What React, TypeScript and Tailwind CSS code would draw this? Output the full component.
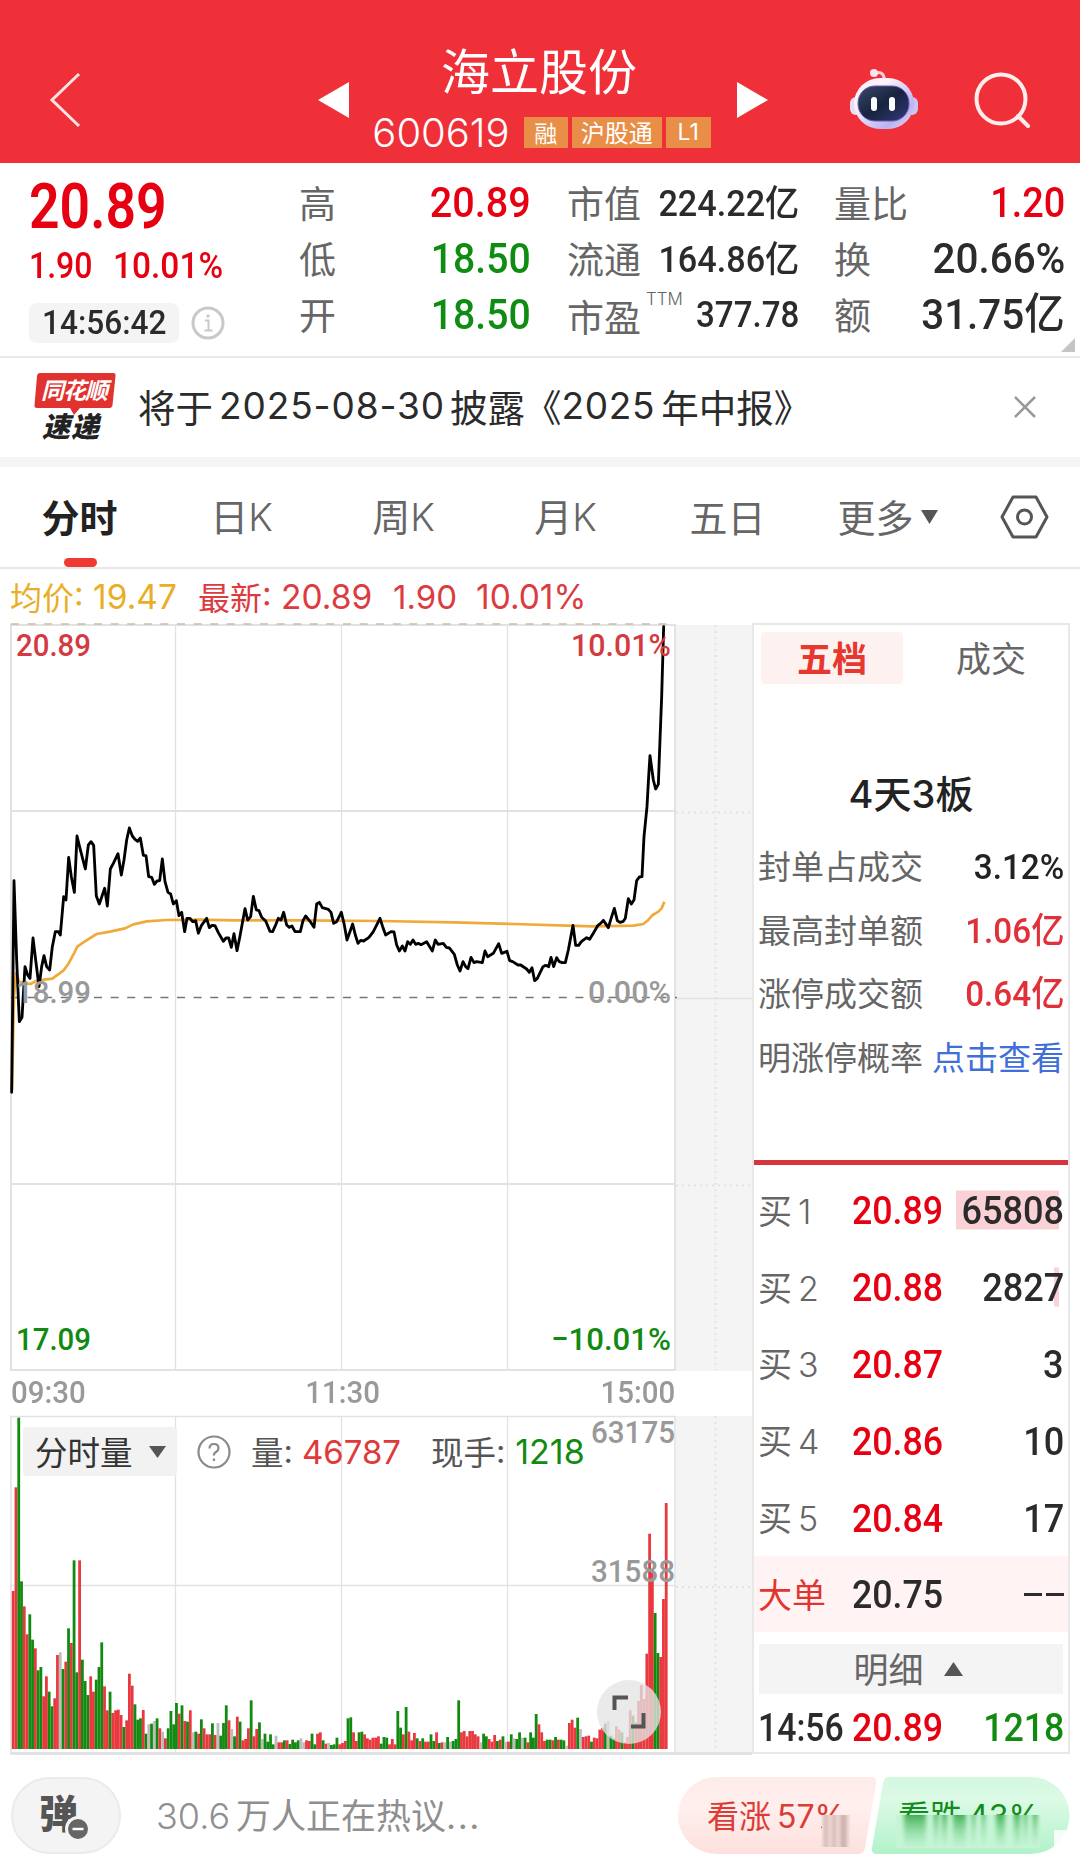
import type { ReactNode } from 'react'
import clsx from 'clsx'

const UP = '#e8393f'
const DOWN = '#128a12'
const FLAT = '#bdbdbd'

const tabs = ['分时', '日K', '周K', '月K', '五日']

const limitStats = [
  { label: '封单占成交', value: '3.12%', tone: 'text-[#222]' },
  { label: '最高封单额', value: '1.06亿', tone: 'text-[#e0303a]' },
  { label: '涨停成交额', value: '0.64亿', tone: 'text-[#e0303a]' },
]

const bids = [
  { level: 1, price: '20.89', volume: '65808', depth: 103 },
  { level: 2, price: '20.88', volume: '2827', depth: 5 },
  { level: 3, price: '20.87', volume: '3', depth: 0 },
  { level: 4, price: '20.86', volume: '10', depth: 0 },
  { level: 5, price: '20.84', volume: '17', depth: 0 },
]

// Minute prices, in thirds of a pixel from the top left of the price chart
const PRICE_LINE =
  '35,1447 42,812 50,1050 58,1235 66,1222 75,1070 83,1095 90,1105 99,984 107,1050 117,1130 125,1070 132,1037 140,1070 149,1080 157,1010 166,965 175,965 181,975 191,860 198,870 206,742 214,800 223,847 231,678 240,715 256,777 265,705 273,695 281,706 289,858 298,882 314,835 322,888 331,777 340,760 354,731 364,795 372,750 380,690 388,654 397,678 405,688 413,694 421,684 430,736 438,737 446,800 455,802 463,823 471,813 479,812 487,747 495,815 504,847 512,852 520,882 529,872 537,917 545,907 554,965 561,925 570,925 578,935 587,932 595,970 604,947 620,925 628,953 636,946 645,947 655,968 670,994 678,984 686,984 694,1012 702,971 711,1022 719,983 727,940 735,896 743,930 752,920 760,859 769,900 777,902 785,922 797,933 810,964 818,965 826,947 835,925 843,930 851,907 860,945 868,952 876,948 885,965 901,965 909,932 917,918 930,934 942,952 950,882 958,877 967,893 985,898 993,907 1001,940 1010,935 1024,907 1032,940 1041,990 1058,942 1066,975 1074,1000 1082,991 1091,993 1107,982 1120,965 1140,925 1148,950 1157,975 1173,965 1182,966 1190,1005 1198,1023 1207,1008 1215,1023 1223,995 1231,1003 1239,990 1247,1003 1255,1000 1263,1004 1280,995 1297,1023 1306,990 1314,1003 1330,1000 1339,1012 1348,1014 1363,1033 1372,1065 1380,1083 1389,1055 1397,1070 1404,1076 1413,1042 1422,1058 1430,1055 1447,1058 1455,1023 1463,1040 1480,1030 1496,1001 1505,1030 1521,1024 1529,1052 1538,1055 1554,1065 1562,1065 1580,1077 1588,1087 1596,1073 1604,1112 1612,1105 1629,1070 1637,1066 1646,1070 1653,1042 1661,1070 1670,1043 1678,1055 1687,1058 1696,1058 1705,1020 1719,946 1727,1006 1736,1006 1744,995 1760,983 1769,988 1780,970 1794,946 1802,940 1810,931 1825,953 1835,920 1843,895 1852,932 1860,937 1870,934 1876,925 1885,866 1894,882 1902,870 1910,812 1918,801 1926,800 1932,680 1941,590 1946,500 1950,437 1960,510 1967,537 1975,523 1980,390 1985,260 1991,50'

const AVERAGE_LINE =
  '36,1440 42,1160 48,1090 58,1115 75,1120 92,1122 110,1112 157,1106 190,1082 205,1062 222,1030 232,1010 250,997 290,972 330,965 375,955 400,943 440,934 500,930 600,929 700,931 900,931 1140,933 1360,937 1540,942 1700,947 1780,949 1900,947 1930,942 1945,930 1958,915 1975,905 1985,895 1993,875'

// One bar per minute: r = up, g = down, x = flat, then the height
const VOLUME =
  'r474 r785 g994 g503 r428 r344 g404 g328 r302 g236 g246 r158 r218 g172 g128 r152 r282 x290 g240 r262 g362 r318 g566 g230 r566 g268 g204 g162 r218 r172 g208 g246 g320 r188 r116 g172 r108 r116 r118 r102 g66 r86 r226 r190 g134 g88 g92 r117 g46 x74 g76 x84 g92 r62 x52 r32 g62 g114 g74 g138 r106 g131 r84 g82 r116 x50 g52 r46 g89 r62 r44 r44 g77 r42 x78 g40 g78 g131 r86 x60 g38 r97 g82 r26 r30 r62 g146 r38 r60 g80 x30 g46 g22 g44 g14 x40 r20 r20 g26 r26 g15 g28 g20 g26 x32 x20 r26 r24 g46 g14 r46 r50 g26 r16 x18 g12 g14 g34 r14 r18 r24 g92 g95 r50 r24 g50 g52 r44 r32 r28 r34 r34 r38 g16 g36 g34 r14 r30 r14 g114 g64 r44 g126 r52 r26 r48 g32 r24 g32 r22 r22 g44 g24 r50 g18 r20 x20 g36 x22 g24 g30 g146 r50 r54 r38 r54 r54 r44 r38 x20 g46 g38 r30 r22 r42 g24 r28 g38 x22 r22 g44 x32 g30 g50 x34 g34 r20 g50 g34 g105 r74 r50 r24 g28 g28 r26 g36 r28 g28 g26 x10 r78 r88 r64 g94 x60 r36 r38 r40 g22 r34 r32 r58 r64 g76 x84 g40 g32 r68 r58 g50 r20 r36 r116 g100 r80 r144 r192 r150 r286 r646 r530 g408 g288 r276 r450 r738'

const bars = VOLUME.split(' ').map((item, i) => ({
  x: 11.8 + i * 2.767,
  height: Number(item.slice(1)) / 3,
  color: item[0] === 'r' ? UP : item[0] === 'g' ? DOWN : FLAT,
}))

function Num({ children, className }: { children: ReactNode; className?: string }) {
  return (
    <span
      className={clsx(
        'inline-block whitespace-nowrap font-medium font-[Roboto,"Noto_Sans_CJK_SC",sans-serif]',
        className,
      )}
    >
      {children}
    </span>
  )
}

function Header() {
  return (
    <header className="flex h-[163px] shrink-0 items-center bg-[#f03038] pt-[36px] text-white">
      <div className="w-[318px] pl-[49px]">
        <svg width="33" height="56" viewBox="0 0 33 56" fill="none" stroke="#ffe4e4" strokeWidth="3">
          <path d="M30 2 3 28l27 26" />
        </svg>
      </div>
      <svg width="31" height="36" viewBox="0 0 31 36" fill="#fff">
        <path d="M0 18 31 0v36z" />
      </svg>
      <div className="flex w-[388px] flex-col items-center pr-[3px]">
        <h1 className="h-[60px] pr-[5px] text-[49px] leading-[57px]">海立股份</h1>
        <div className="flex h-[60px] items-center gap-[4px] pt-[6px]">
          <span className="mr-[10px] font-[Inter] text-[40px] leading-none font-light">600619</span>
          <span className="h-[31px] w-[44px] bg-[#e98e47] text-center text-[23px] leading-[30px]">融</span>
          <span className="h-[31px] w-[90px] bg-[#e98e47] text-center text-[24px] leading-[30px]">沪股通</span>
          <span className="h-[31px] w-[45px] bg-[#e98e47] text-center font-[Inter] text-[23px] leading-[31px]">L1</span>
        </div>
      </div>
      <svg width="31" height="36" viewBox="0 0 31 36" fill="#fff">
        <path d="M31 18 0 0v36z" />
      </svg>
      <svg className="ml-[81px]" width="70" height="64" viewBox="0 0 70 64">
        <defs>
          <linearGradient id="shell" x1="0" y1="0" x2="1" y2="1">
            <stop offset="0.3" stopColor="#fdf2fa" />
            <stop offset="0.75" stopColor="#b9b3f2" />
            <stop offset="1" stopColor="#f3d9ee" />
          </linearGradient>
          <linearGradient id="visor" x1="0" y1="0" x2="1" y2="1">
            <stop offset="0" stopColor="#3a4a68" />
            <stop offset="0.5" stopColor="#18233f" />
            <stop offset="1" stopColor="#303a78" />
          </linearGradient>
        </defs>
        <path d="M26 5c7-2 10 2 9 9" stroke="#fbd0dc" strokeWidth="3" fill="none" />
        <circle cx="25" cy="5" r="4" fill="#fde3ea" />
        <rect x="1" y="29" width="12" height="18" rx="6" fill="#e9ddf6" />
        <rect x="57" y="29" width="12" height="18" rx="6" fill="#c9c4f4" />
        <rect x="5" y="10" width="60" height="51" rx="26" fill="url(#shell)" />
        <rect x="9" y="18" width="51" height="35" rx="17" fill="url(#visor)" stroke="#6a5bb8" strokeWidth="1" />
        <rect x="22" y="29" width="6" height="14" rx="3" fill="#fff" />
        <rect x="40" y="29" width="6" height="14" rx="3" fill="#fff" />
      </svg>
      <svg className="ml-[54px]" width="58" height="56" viewBox="0 0 58 56" fill="none" stroke="#ffecec" strokeWidth="4">
        <circle cx="28" cy="27" r="24.5" />
        <path d="m45 44 10 10" strokeLinecap="round" />
      </svg>
    </header>
  )
}

function Stat({ label, children }: { label: ReactNode; children: ReactNode }) {
  return (
    <div className="flex h-[56px] items-center justify-between">
      <span className="text-[37px] leading-[52px] text-[#666]">{label}</span>
      {children}
    </div>
  )
}

function Quote() {
  return (
    <section className="relative flex h-[195px] shrink-0 border-b-2 border-[#e8e8e8] pt-[11px] text-[#2b2b2b]">
      <div className="w-[301px] pt-[2px] pl-[29px] text-[#e60012]">
        <div className="h-[62px]">
          <Num className="origin-left scale-x-[0.85] text-[63px] leading-[62px] font-semibold">20.89</Num>
        </div>
        <div className="flex h-[56px] items-center">
          <Num className="w-[84px] origin-left scale-x-[0.89] text-[36px]">1.90</Num>
          <Num className="origin-left scale-x-[0.93] text-[36px]">10.01%</Num>
        </div>
        <div className="mt-[9px] flex h-[40px] items-center">
          <div className="h-[40px] w-[150px] rounded-lg bg-[#f4f4f4] pl-[13px] text-[#2b2b2b]">
            <Num className="origin-left scale-x-[0.93] text-[34px] leading-[39px]">14:56:42</Num>
          </div>
          <svg className="ml-[12px]" width="34" height="34" viewBox="0 0 34 34" fill="none" stroke="#c9c9c9" strokeWidth="3">
            <circle cx="17" cy="17" r="15" />
            <path d="M14 14.500h3.500v9M13.500 24.500h8" strokeWidth="2" />
            <path d="M17 8.500v3" />
          </svg>
        </div>
      </div>
      <div className="-ml-[2px] w-[232px]">
        <Stat label="高">
          <Num className="origin-right scale-x-[0.92] text-[43px] text-[#e60012]">20.89</Num>
        </Stat>
        <Stat label="低">
          <Num className="origin-right scale-x-[0.91] text-[43px] text-[#0f8c12]">18.50</Num>
        </Stat>
        <Stat label="开">
          <Num className="origin-right scale-x-[0.91] text-[43px] text-[#0f8c12]">18.50</Num>
        </Stat>
      </div>
      <div className="ml-[36px] w-[232px]">
        <Stat label="市值">
          <Num className="origin-right scale-x-[0.95] pt-[3px] text-[36px]">224.22亿</Num>
        </Stat>
        <Stat label="流通">
          <Num className="origin-right scale-x-[0.95] pt-[3px] text-[36px]">164.86亿</Num>
        </Stat>
        <Stat
          label={
            <span className="relative top-[2px]">
              市盈
              <span className="absolute top-[2px] left-[79px] font-[Inter] text-[17px] leading-none font-light">TTM</span>
            </span>
          }
        >
          <Num className="origin-right scale-x-[0.92] pt-[2px] text-[36px]">377.78</Num>
        </Stat>
      </div>
      <div className="ml-[35px] w-[231px]">
        <Stat label="量比">
          <Num className="origin-right scale-x-[0.88] text-[43px] text-[#e60012]">1.20</Num>
        </Stat>
        <Stat label="换">
          <Num className="origin-right scale-x-[0.94] text-[43px]">20.66%</Num>
        </Stat>
        <Stat label="额">
          <Num className="origin-right scale-x-[0.94] text-[43px]">31.75亿</Num>
        </Stat>
      </div>
      <svg className="absolute right-[5px] bottom-[4px]" width="14" height="14" viewBox="0 0 14 14" fill="#c4c4c4">
        <path d="M14 0v14H0z" />
      </svg>
    </section>
  )
}

function Notice() {
  return (
    <section className="flex h-[109px] shrink-0 items-start border-b-10 border-[#f5f5f5] pt-[15px] pl-[34px]">
      <div className="relative h-[70px] w-[82px] font-bold italic">
        <svg className="absolute inset-0" width="82" height="44" viewBox="0 0 82 44" fill="#e2322f">
          <path d="M6 0h73q3 0 2.500 3l-3 29q-.5 3-3 3H46l-6 7-4-7H3q-3 0-2.500-3L3 3q.5-3 3-3z" />
        </svg>
        <div className="relative h-[35px] pl-[7px] text-[23px] leading-[33px] tracking-[-1px] text-white">同花顺</div>
        <div className="h-[32px] pl-[8px] text-[28px] leading-[34px] font-black tracking-[1px] text-[#222]">速递</div>
      </div>
      <p className="ml-[22px] flex h-[66px] w-[661px] items-center text-[37.500px] whitespace-nowrap text-[#2b2b2b]">
        <span>将于</span>
        <span className="ml-[6px] font-[Inter] text-[37px] tracking-[0.9px]">2025-08-30</span>
        <span className="ml-[5px]">披露</span>
        <span className="-ml-[1px]">《</span>
        <span className="font-[Inter] text-[37px] tracking-[0.7px]">2025</span>
        <span className="ml-[6px]">年中报》</span>
      </p>
      <svg className="mt-[23px] ml-[215px]" width="22" height="22" viewBox="0 0 22 22" stroke="#999" strokeWidth="2.500">
        <path d="m1 1 20 20M21 1 1 21" />
      </svg>
    </section>
  )
}

function PeriodTabs() {
  return (
    <nav className="flex h-[102px] shrink-0 items-center border-b-2 border-[#e8e8e8] text-[38px] text-[#666]">
      {tabs.map((tab, i) => (
        <div key={tab} className="relative flex h-full w-[162px] items-center justify-center pr-[3px]">
          <span className={clsx('-mt-[3px]', i === 0 && 'font-bold text-[#222]')}>
            {tab.replace('K', '')}
            {tab.includes('K') && <span className="font-[Inter] text-[38px] font-light">K</span>}
          </span>
          {i === 0 && <span className="absolute bottom-0 left-[64px] h-[9px] w-[33px] rounded-full bg-[#ee3a33]" />}
        </div>
      ))}
      <div className="flex w-[162px] items-center justify-center gap-[7px] pr-[7px]">
        <span className="-mt-[4px]">更多</span>
        <svg width="17" height="14" viewBox="0 0 17 14" fill="#555">
          <path d="M0 0h17L8.500 14z" />
        </svg>
      </div>
      <svg className="ml-[28px]" width="49" height="44" viewBox="0 0 49 44" fill="none" stroke="#555" strokeWidth="3">
        <path d="M13 2h23l11 20-11 20H13L2 22z" strokeLinejoin="round" />
        <circle cx="24.500" cy="22" r="7" />
      </svg>
    </nav>
  )
}

function PriceChart() {
  return (
    <svg width="752" height="749" viewBox="0 623 752 749" fontFamily="Roboto" fontSize="32" fontWeight="500">
      <rect x="676" y="625" width="76" height="746" fill="#f4f4f4" />
      <g stroke="#e2e2e2" strokeWidth="2" fill="none">
        <path d="M11 625V1370H675V625zM11 811H675M11 1184H675" />
        <path d="M175.500 625V1370M341.500 625V1370M507.500 625V1370" strokeWidth="1.300" />
        <path d="M715.500 625V1370M676 812.500H752M676 1185.500H752" strokeDasharray="2 4" />
        <path d="M676 998.500H752" strokeWidth="1.500" />
      </g>
      <path d="M11 624H675" stroke="#c9bf9e" strokeWidth="1.500" strokeDasharray="8 8.600" />
      <path d="M11 997.500H677" stroke="#777" strokeWidth="1.500" strokeDasharray="8 8.600" />
      <g transform="translate(0 610) scale(0.33333)" fill="none" strokeLinejoin="round">
        <polyline points={AVERAGE_LINE} stroke="#efaa3a" strokeWidth="8" />
        <polyline points={PRICE_LINE} stroke="#000" strokeWidth="8.500" strokeLinecap="round" />
      </g>
      <text x="16" y="656" textLength="75" lengthAdjust="spacingAndGlyphs" fill="#d43a42">20.89</text>
      <text x="571" y="656" textLength="100" lengthAdjust="spacingAndGlyphs" fill="#d43a42">10.01%</text>
      <text x="16" y="1003" textLength="75" lengthAdjust="spacingAndGlyphs" fill="#999">18.99</text>
      <text x="588" y="1003" textLength="83" lengthAdjust="spacingAndGlyphs" fill="#999">0.00%</text>
      <text x="16" y="1350" textLength="75" lengthAdjust="spacingAndGlyphs" fill={DOWN}>17.09</text>
      <text x="551" y="1350" textLength="120" lengthAdjust="spacingAndGlyphs" fill={DOWN}>−10.01%</text>
    </svg>
  )
}

function VolumeChart() {
  return (
    <div className="relative h-[340px]">
      <svg className="overflow-visible" width="752" height="340" viewBox="0 1415 752 340" fontFamily="Roboto" fontSize="32" fontWeight="500">
        <rect x="676" y="1416" width="76" height="339" fill="#f4f4f4" />
        <g stroke="#e2e2e2" strokeWidth="1.500" fill="none">
          <path d="M11 1753V1416.500H675V1753M11 1585.500H675" />
          <path d="M10 1753.500H752" strokeWidth="3" />
          <path d="M175.500 1416V1753M341.500 1416V1753M507.500 1416V1753" strokeWidth="1.300" />
          <path d="M715.500 1416V1753M676 1587H752" strokeWidth="2" strokeDasharray="2 4" />
        </g>
        {bars.map((bar) => (
          <rect key={bar.x} x={bar.x} y={1749 - bar.height} width="2.800" height={bar.height} fill={bar.color} />
        ))}
        <text x="591" y="1443" textLength="84" lengthAdjust="spacingAndGlyphs" fill="#999">63175</text>
        <text x="591" y="1582" textLength="84" lengthAdjust="spacingAndGlyphs" fill="#999">31588</text>
        <circle cx="629" cy="1712" r="32" fill="#e4e4e4" fillOpacity="0.780" />
        <path d="M614.500 1710V1697.500H628M631 1726.500H643.500V1713" fill="none" stroke="#555" strokeWidth="4" />
      </svg>
      <div className="absolute top-[12px] left-[23px] flex h-[49px] items-center text-[32.500px] leading-[40px] whitespace-nowrap text-[#555]">
        <div className="flex h-[49px] w-[154px] items-center rounded bg-[#f2f2f2] pl-[12px] text-[#333]">
          <span className="-mt-[2px]">分时量</span>
          <svg className="ml-[16px]" width="17" height="12" viewBox="0 0 17 12" fill="#555">
            <path d="M0 0h17L8.500 12z" />
          </svg>
        </div>
        <svg className="ml-[20px]" width="34" height="34" viewBox="0 0 34 34" fill="none" stroke="#8a8a8a" strokeWidth="2.200">
          <circle cx="17" cy="17" r="15.500" />
          <path d="M12.500 13.500q0-4.500 4.500-4.500t4.500 4.200q0 2.300-2.500 3.800t-2 3.500M17 23.500v2.500" />
        </svg>
        <span className="-mt-[2px] ml-[20px]">量</span>
        <span className="font-[Inter]">:</span>
        <span className="ml-[9px] w-[102px] font-[Inter] text-[33px] text-[#df3a3a]">46787</span>
        <span className="-mt-[2px] ml-[27px]">现手</span>
        <span className="font-[Inter]">:</span>
        <span className="ml-[10px] font-[Inter] text-[34px] text-[#128a12]">1218</span>
      </div>
    </div>
  )
}

function OrderBook() {
  return (
    <aside className="mt-[54px] flex h-[1131px] w-[318px] flex-col border-2 border-[#e8e8e8] text-[#2b2b2b]">
      <div className="flex shrink-0 pt-[7px] pl-[7px] text-[35px]">
        <div className="h-[52px] w-[142px] rounded bg-[#fef2f1] text-center leading-[50px] font-bold text-[#e8372f]">五档</div>
        <div className="ml-[17px] h-[52px] w-[142px] text-center leading-[50px] text-[#666]">成交</div>
      </div>
      <div className="mt-[81px] h-[54px] shrink-0 text-center text-[38px] leading-[54px] font-medium text-[#222]">
        <span className="font-[Inter]">4</span>天<span className="font-[Inter]">3</span>板
      </div>
      <div className="mt-[15px] h-[326px] shrink-0 pr-[4px] pl-[4px] text-[33px]">
        {limitStats.map((row) => (
          <div key={row.label} className="flex h-[63.700px] items-center justify-between">
            <span className="text-[#666]">{row.label}</span>
            <Num className={clsx('origin-right scale-x-[0.95] pt-[5px] text-[35px]', row.tone)}>{row.value}</Num>
          </div>
        ))}
        <div className="flex h-[63.700px] items-center justify-between">
          <span className="text-[#666]">明涨停概率</span>
          <span className="text-[#3f6fd9]">点击查看</span>
        </div>
      </div>
      <div className="h-[5px] shrink-0 bg-[#d3363d]" />
      <div className="shrink-0 pt-[7px]">
        {bids.map((bid) => (
          <div key={bid.level} className="flex h-[76.800px] items-center pl-[4px] text-[34px]">
            <span className="w-[94px] text-[#666]">
              买<span className="ml-[6px] font-[Inter] font-light">{bid.level}</span>
            </span>
            <Num className="w-[96px] origin-left scale-x-[0.94] pt-[3px] text-[38px] text-[#e60012]">{bid.price}</Num>
            <div className="relative flex flex-1 justify-end pr-[4px]">
              <span
                className="absolute top-1/2 right-[9px] h-[39px] -translate-y-1/2 bg-[#fad2d5]"
                style={{ width: bid.depth }}
              />
              <Num className="relative origin-right scale-x-[0.95] pt-[3px] text-[38px]">{bid.volume}</Num>
            </div>
          </div>
        ))}
      </div>
      <div className="flex h-[76px] shrink-0 items-center bg-[#fff3f3] pr-[4px] pl-[4px]">
        <span className="w-[94px] text-[34px] text-[#e2352f]">大单</span>
        <Num className="origin-left scale-x-[0.94] pt-[4px] text-[38px]">20.75</Num>
        <svg className="mt-[2px] ml-auto" width="40" height="4" viewBox="0 0 40 4" fill="#2b2b2b">
          <path d="M0 0h18v3H0zM22 0h18v3H22z" />
        </svg>
      </div>
      <div className="mx-[5px] mt-[12px] flex h-[50px] shrink-0 items-center justify-center gap-[20px] bg-[#f4f4f4] pr-[6px] text-[35px] text-[#666]">
        <span className="-mt-[2px]">明细</span>
        <svg width="19" height="14" viewBox="0 0 19 14" fill="#555">
          <path d="M0 14h19L9.500 0z" />
        </svg>
      </div>
      <div className="flex h-[57px] shrink-0 items-center pt-[13px] pr-[4px] pl-[4px]">
        <Num className="w-[94px] origin-left scale-x-[0.89] text-[38px]">14:56</Num>
        <Num className="origin-left scale-x-[0.94] text-[38px] text-[#e60012]">20.89</Num>
        <Num className="ml-auto origin-right scale-x-[0.94] text-[38px] text-[#128a12]">1218</Num>
      </div>
    </aside>
  )
}

function Footer() {
  return (
    <footer className="flex h-[104px] items-start pt-[22px] pl-[11px]">
      <div className="relative h-[77px] w-[110px] rounded-full border-2 border-[#ebebeb] bg-[#f4f4f4] pl-[26px]">
        <span className="block text-[39px] leading-[64px] font-black text-[#555]">弹</span>
        <svg className="absolute top-[37px] left-[52px]" width="26" height="26" viewBox="0 0 26 26">
          <circle cx="13" cy="13" r="11.500" fill="#666" stroke="#f4f4f4" strokeWidth="3" />
          <path d="M7.500 13h11" stroke="#fff" strokeWidth="2.500" />
        </svg>
      </div>
      <p className="ml-[35px] w-[522px] text-[35px] leading-[74px] text-[#8f8f8f]">
        <span className="font-[Inter] text-[36px] font-light">30.6</span>
        <span className="ml-[6px]">万人正在热议</span>
        <span className="font-[Inter] tracking-[1.5px]">...</span>
      </p>
      <div className="relative flex h-[77px] w-[392px] text-[32px] leading-[75px]">
        <svg className="absolute inset-0" width="392" height="77" viewBox="0 0 392 77">
          <defs>
            <linearGradient id="rise" x1="0" y1="0" x2="0" y2="1">
              <stop offset="0" stopColor="#fdebea" />
              <stop offset="0.400" stopColor="#ffefed" />
              <stop offset="1" stopColor="#fde0dd" />
            </linearGradient>
            <linearGradient id="fall" x1="0" y1="0" x2="0" y2="1">
              <stop offset="0" stopColor="#d3f8df" />
              <stop offset="0.300" stopColor="#dcfae6" />
              <stop offset="1" stopColor="#b2f2c9" />
            </linearGradient>
          </defs>
          <path d="M38.500 0H193q6 0 5 6l-11 65q-1 6-7 6H38.500a38.500 38.500 0 0 1 0-77z" fill="url(#rise)" />
          <path d="M211 0H353a38.500 38.500 0 0 1 0 77H199q-6 0-5-6l11-65q1-6 6-6z" fill="url(#fall)" />
        </svg>
        <span className="relative w-[190px] pl-[29px] text-[#dc3b36]">
          看涨<span className="ml-[6px] font-[Inter]">57%</span>
        </span>
        <span className="relative pl-[30px] text-[#118c1c]">
          看跌<span className="ml-[6px] font-[Inter]">43%</span>
        </span>
        {/* Smeared lower edge of the vote labels */}
        <svg className="absolute inset-0" width="392" height="77" viewBox="0 0 392 77">
          <defs>
            <linearGradient id="smearGreen" x1="0" y1="0" x2="0" y2="1">
              <stop offset="0" stopColor="#1c9a2c" stopOpacity="0.750" />
              <stop offset="1" stopColor="#7fdc97" stopOpacity="0.100" />
            </linearGradient>
            <filter id="soft" x="-10%" y="-10%" width="120%" height="120%">
              <feGaussianBlur stdDeviation="2 0.600" />
            </filter>
          </defs>
          <path d="M218 38H362V71H218z" fill="#c6f5d6" />
          <g filter="url(#soft)" fill="url(#smearGreen)">
            <path d="M226 38h22v32h-22zM256 38h4v32h-4zM264 38h5v32h-5zM275 38h13v32h-13zM294 38h3v32h-3zM304 38h3v32h-3zM318 38h9v32h-9zM336 38h6v32h-6zM346 38h3v32h-3zM355 38h4v32h-4z" />
          </g>
          <path d="M144 38H172V71H144z" fill="#fbe5e2" />
          <g filter="url(#soft)" fill="#8d6f6d" fillOpacity="0.450">
            <path d="M146 38h4v32h-4zM154 38h4v32h-4zM162 38h7v32h-7z" />
          </g>
          <path d="M376 53h16v24h-16z" fill="#fff" fillOpacity="0.850" />
        </svg>
      </div>
    </footer>
  )
}

export default function App() {
  return (
    <div className="flex h-[1859px] w-[1080px] flex-col overflow-hidden bg-white font-['Noto_Sans_CJK_SC',sans-serif]">
      <Header />
      <Quote />
      <Notice />
      <PeriodTabs />
      <main className="flex h-[1186px] shrink-0">
        <div className="w-[752px]">
          <div className="flex h-[54px] items-center pt-[1px] pl-[10px] text-[32px] leading-[48px] whitespace-nowrap text-[#e9ae28]">
            <span className="-mt-[2px]">均价</span>
            <span className="w-[104px] font-[Inter] text-[33.500px]">: 19.47</span>
            <div className="ml-[20px] flex items-center text-[#dc3b3f]">
              <span className="-mt-[2px]">最新</span>
              <span className="w-[131px] font-[Inter] text-[33.500px]">: 20.89</span>
              <span className="w-[83px] font-[Inter] text-[33px]">1.90</span>
              <span className="font-[Inter] text-[33.500px]">10.01%</span>
            </div>
          </div>
          <PriceChart />
          <div className="relative -mt-[7px] flex h-[50px] w-[675px] items-center justify-between pt-[4px] pl-[11px] text-[#999]">
            <Num className="origin-left scale-x-[0.92] text-[32px]">09:30</Num>
            <Num className="scale-x-[0.92] text-[32px]">11:30</Num>
            <Num className="origin-right scale-x-[0.92] text-[32px]">15:00</Num>
          </div>
          <VolumeChart />
        </div>
        <OrderBook />
      </main>
      <Footer />
    </div>
  )
}
